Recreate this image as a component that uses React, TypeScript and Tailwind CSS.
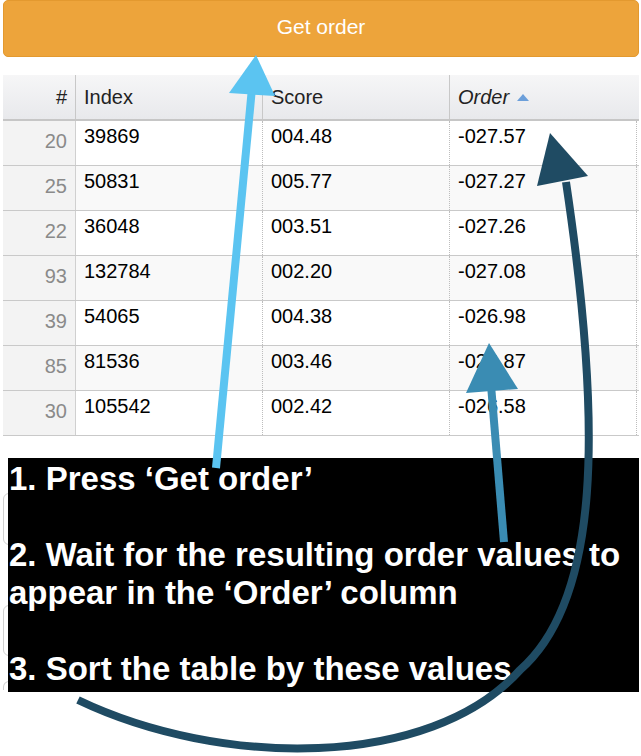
import React from 'react';

interface Row {
    n: number;
    index: string;
    score: string;
    order: string;
}

const ROWS: Row[] = [
    { n: 20, index: '39869', score: '004.48', order: '-027.57' },
    { n: 25, index: '50831', score: '005.77', order: '-027.27' },
    { n: 22, index: '36048', score: '003.51', order: '-027.26' },
    { n: 93, index: '132784', score: '002.20', order: '-027.08' },
    { n: 39, index: '54065', score: '004.38', order: '-026.98' },
    { n: 85, index: '81536', score: '003.46', order: '-026.87' },
    { n: 30, index: '105542', score: '002.42', order: '-026.58' },
];

const Arrows: React.FC = () => (
    <svg className="absolute inset-0 pointer-events-none" width="641" height="756" viewBox="0 0 641 756">
        {/* light blue: to the button */}
        <line x1="216" y1="468" x2="252" y2="88" stroke="#5bc4f1" strokeWidth="8" />
        <polygon points="256,55 229,93 275,96" fill="#5bc4f1" />

        {/* mid blue: into the Order column */}
        <line x1="504" y1="542" x2="491" y2="385" stroke="#3a8cb3" strokeWidth="8" />
        <polygon points="489,343 466,393 518,389" fill="#3a8cb3" />

        {/* dark: round to the sort arrow */}
        <path d="M78 700 C 220 768, 430 770, 520 670 C 600 600, 603 430, 566 182" fill="none" stroke="#1f4b63" strokeWidth="8" />
        <polygon points="550,133 537,186 588,176" fill="#1f4b63" />
    </svg>
);

const App: React.FC = () => {
    return (
        <div className="relative w-[641px] h-[756px] overflow-hidden bg-white font-['Liberation_Sans',Arial,sans-serif] text-black">
            <div className="pl-[3px] pr-[2px]">
                <button className="w-full h-[57px] rounded-[5px] bg-[#eda43b] border border-[#e3992f] text-white text-[21px] flex items-center justify-center pb-[3px]">
                    Get order
                </button>

                {/* Table */}
                <div className="mt-[18px] text-[20px] leading-[24px]">
                    <div className="grid grid-cols-[73px_187px_187px_1fr] h-[46px] border-b-2 border-[#c6c6c6] bg-gradient-to-b from-[#f6f6f7] to-[#e8e9ec] text-[#222]">
                        <div className="flex items-center justify-end pr-2 border-r border-[#c8c8c8]">#</div>
                        <div className="flex items-center px-2 border-r border-[#c8c8c8]">Index</div>
                        <div className="flex items-center px-2 border-r border-[#c8c8c8]">Score</div>
                        <div className="flex items-center px-2 gap-[8px]">
                            <span className="italic">Order</span>
                            <svg width="12" height="7" viewBox="0 0 12 7"><polygon points="6,0 12,7 0,7" fill="#6c9fda" /></svg>
                        </div>
                    </div>
                    {ROWS.map((r, i) => (
                        <div key={r.n}
                            className={`grid grid-cols-[73px_187px_187px_1fr] h-[45px] border-b border-[#c9c9c9] ${i % 2 === 1 ? 'bg-[#f9f9f9]' : 'bg-white'}`}
                        >
                            <div className="pt-[8px] pr-2 text-right text-[#8a8a8a] bg-[#f3f3f3] border-r border-[#d0d0d0]">{r.n}</div>
                            <div className="pt-[3px] px-2 border-r border-dotted border-[#bdbdbd]">{r.index}</div>
                            <div className="pt-[3px] px-2 border-r border-dotted border-[#bdbdbd]">{r.score}</div>
                            <div className="pt-[3px] px-2 border-r border-dotted border-[#bdbdbd] mr-[2px]">{r.order}</div>
                        </div>
                    ))}
                </div>

                {/* Form fields that sit under the note */}
                <div className="mt-[57px]">
                    <div className="h-[52px] rounded-[6px] border border-[#d0d0d0]" />
                    <div className="mt-[60px] h-[51px] rounded-[6px] border border-[#d0d0d0]" />
                    <div className="mt-[25px] h-[9px] rounded-t-[6px] border-t border-x border-[#d0d0d0]" />
                </div>
            </div>

            {/* Note overlay */}
            <div className="absolute left-[8px] top-[458px] w-[631px] h-[234px] bg-black pt-[2px] pl-[1px] text-white font-bold text-[33px] leading-[38px]">
                <div>1. Press ‘Get order’</div>
                <div className="h-[38px]" />
                <div>2. Wait for the resulting order values to</div>
                <div>appear in the ‘Order’ column</div>
                <div className="h-[38px]" />
                <div>3. Sort the table by these values</div>
            </div>

            <Arrows />
        </div>
    );
};

export default App;
